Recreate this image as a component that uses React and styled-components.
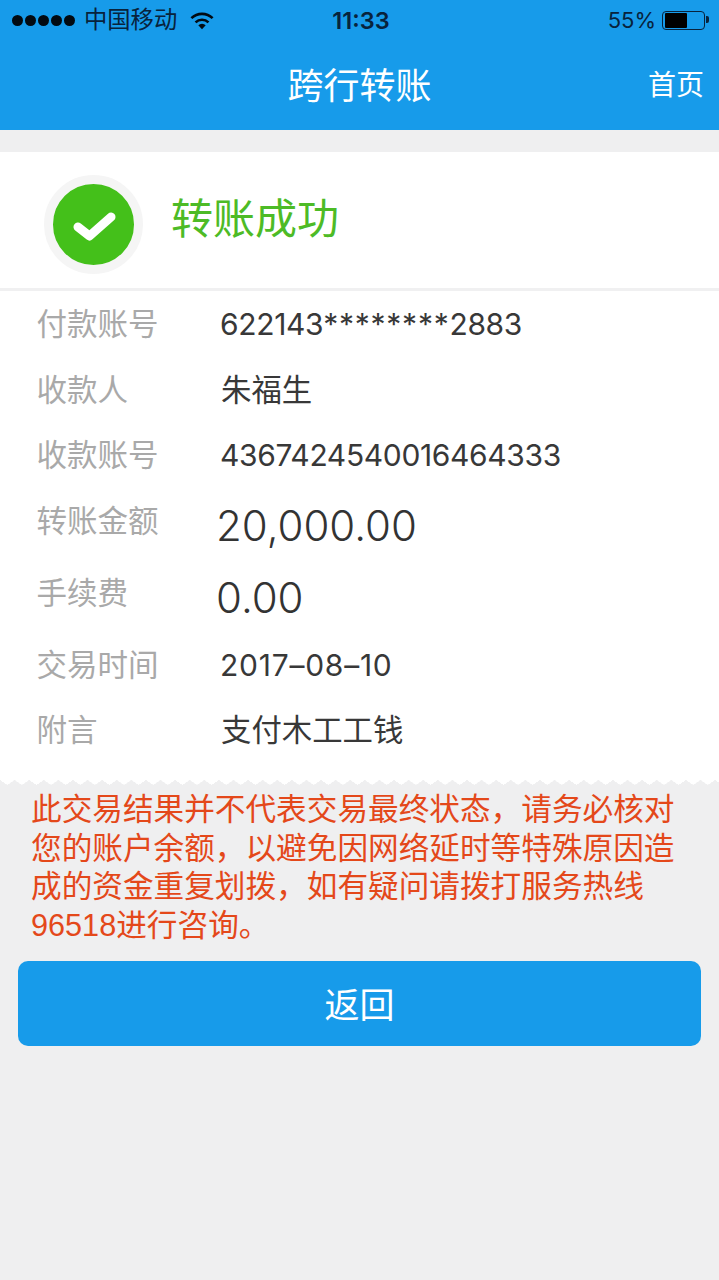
import React from 'react';
import styled, { createGlobalStyle } from 'styled-components';

const FONT = '"Liberation Sans", "Noto Sans CJK SC", sans-serif';
const NUM_FONT = 'Inter, "Noto Sans CJK SC", sans-serif';
const BLUE = '#179bea';

const GlobalStyle = createGlobalStyle`
  html, body { margin: 0; padding: 0; background: #efeff0; }
  body { font-family: ${FONT}; }
`;

const Page = styled.div`
  width: 719px;
  min-height: 1280px;
  background: #efeff0;
`;

const Header = styled.header`
  height: 130px;
  background: ${BLUE};
`;

const StatusBar = styled.div`
  height: 40px;
  display: grid;
  grid-template-columns: 1fr auto 1fr;
  align-items: center;
  padding: 0 14px 0 12px;
  color: #08233c;
  font-family: ${NUM_FONT};
  font-size: 23.3px;
`;

const StatusLeft = styled.div`
  display: flex;
  align-items: center;
`;

const Dots = styled.div`
  display: flex;
  gap: 2px;
  margin-right: 9px;
`;

const Dot = styled.span`
  width: 11px;
  height: 11px;
  border-radius: 50%;
  background: #020a12;
`;

const Carrier = styled.span`
  margin-right: 13px;
  line-height: 40px;
`;

const Clock = styled.span`
  margin-left: 5px;
  font-weight: 600;
  font-size: 23.5px;
`;

const StatusRight = styled.div`
  display: flex;
  align-items: center;
  justify-content: flex-end;
  font-size: 22px;
  gap: 6px;
`;

const BatteryShell = styled.div`
  position: relative;
  width: 38px;
  height: 15px;
  border: 1.5px solid #08233c;
  border-radius: 4px;
  padding: 1px 1.5px;
  &::after {
    content: '';
    position: absolute;
    right: -5px;
    top: 4px;
    width: 3px;
    height: 7px;
    border-radius: 0 2px 2px 0;
    background: #08233c;
  }
`;

const BatteryFill = styled.div`
  height: 100%;
  background: #000;
  border-radius: 1px;
`;

const NavBar = styled.div`
  position: relative;
  height: 90px;
  display: flex;
  align-items: center;
  justify-content: center;
  color: #fff;
`;

const NavTitle = styled.h1`
  margin: 4px 0 0;
  font-size: 36px;
  font-weight: 400;
  line-height: 50px;
`;

const NavLink = styled.a`
  position: absolute;
  right: 15px;
  top: 23px;
  font-size: 28px;
  line-height: 46px;
`;

const ResultCard = styled.section`
  margin-top: 22px;
  height: 136px;
  background: #fff;
  border-bottom: 3px solid #f0f0f1;
  display: flex;
  align-items: center;
  padding-left: 44px;
  gap: 28px;
`;

const Badge = styled.div`
  width: 81px;
  height: 81px;
  margin-top: 9px;
  border-radius: 50%;
  background: #44c01a;
  border: 9px solid #f5f5f5;
  display: flex;
  align-items: center;
  justify-content: center;
`;

const ResultText = styled.div`
  color: #4dbb26;
  font-size: 42px;
  line-height: 60px;
`;

const Details = styled.section`
  position: relative;
  background: #fff;
  padding: 1px 0 16.5px;
  &::after {
    content: '';
    position: absolute;
    left: 0;
    right: 0;
    bottom: -5px;
    height: 5px;
    background: conic-gradient(from -55.6deg at 50% 100%, #fff 111.2deg, transparent 0) 0 0 / 14.6px 5px repeat-x;
  }
`;

const Row = styled.div`
  display: flex;
  height: ${(p) => (p.$big ? '72px' : '65.5px')};
  padding-left: 36.5px;
`;

const Label = styled.div`
  width: 184.5px;
  color: #a9a9a9;
  font-size: 30.5px;
  line-height: 65.5px;
`;

const Value = styled.div`
  color: #383838;
  font-family: ${NUM_FONT};
  font-size: 30.4px;
  line-height: 65.5px;
`;

const Digits = styled.span`
  margin-left: -1px;
  font-size: 30px;
  letter-spacing: ${(p) => (p.$wide ? '0.75px' : '-0.35px')};
`;

const Stars = styled.span`
  letter-spacing: 0.75px;
`;

const Amount = styled.div`
  color: #333;
  margin-left: -5px;
  font-family: ${NUM_FONT};
  font-size: 42px;
  font-weight: 300;
  line-height: 74px;
`;

const Notice = styled.p`
  margin: 10px 0 0;
  padding: 0 31px;
  color: #e4481a;
  font-size: 30.65px;
  line-height: 38.6px;
`;

const BackButton = styled.button`
  display: block;
  width: 683px;
  height: 85px;
  margin: 17px 0 0 18px;
  padding: 0 0 3px;
  border: none;
  border-radius: 10px;
  background: ${BLUE};
  color: #fff;
  font-family: ${FONT};
  font-size: 35px;
`;

const rows = [
  { label: '付款账号', digits: <>622143<Stars>********</Stars>2883</> },
  { label: '收款人', value: '朱福生' },
  { label: '收款账号', digits: '4367424540016464333' },
  { label: '转账金额', amount: '20,000.00' },
  { label: '手续费', amount: '0.00' },
  { label: '交易时间', digits: '2017–08–10', wide: true },
  { label: '附言', value: '支付木工工钱' },
];

const WifiIcon = () => (
  <svg width="24" height="19" viewBox="0 0 26 20">
    <path d="M1.5 7.5a16.5 16.5 0 0 1 23 0" fill="none" stroke="#020a12" strokeWidth="2.8" />
    <path d="M6 12a10 10 0 0 1 14 0" fill="none" stroke="#020a12" strokeWidth="2.8" />
    <path d="M9 15.2a5.6 5.6 0 0 1 8 0L13 19.5z" fill="#020a12" />
  </svg>
);

const CheckIcon = () => (
  <svg width="44" height="36" viewBox="0 0 44 36">
    <path d="M6 20l11.5 9L39 10" fill="none" stroke="#fff" strokeWidth="9" strokeLinecap="round" strokeLinejoin="round" />
  </svg>
);

export default function App() {
  return (
    <Page>
      <GlobalStyle />
      <Header>
        <StatusBar>
          <StatusLeft>
            <Dots>
              {[0, 1, 2, 3, 4].map((i) => <Dot key={i} />)}
            </Dots>
            <Carrier>中国移动</Carrier>
            <WifiIcon />
          </StatusLeft>
          <Clock>11:33</Clock>
          <StatusRight>
            55%
            <BatteryShell>
              <BatteryFill style={{ width: '58%' }} />
            </BatteryShell>
          </StatusRight>
        </StatusBar>
        <NavBar>
          <NavTitle>跨行转账</NavTitle>
          <NavLink>首页</NavLink>
        </NavBar>
      </Header>
      <ResultCard>
        <Badge><CheckIcon /></Badge>
        <ResultText>转账成功</ResultText>
      </ResultCard>
      <Details>
        {rows.map((r) => (
          <Row key={r.label} $big={!!r.amount}>
            <Label>{r.label}</Label>
            {r.amount && <Amount>{r.amount}</Amount>}
            {r.digits && <Value><Digits $wide={r.wide}>{r.digits}</Digits></Value>}
            {r.value && <Value>{r.value}</Value>}
          </Row>
        ))}
      </Details>
      <Notice>此交易结果并不代表交易最终状态，请务必核对您的账户余额，以避免因网络延时等特殊原因造成的资金重复划拨，如有疑问请拨打服务热线96518进行咨询。</Notice>
      <BackButton>返回</BackButton>
    </Page>
  );
}
